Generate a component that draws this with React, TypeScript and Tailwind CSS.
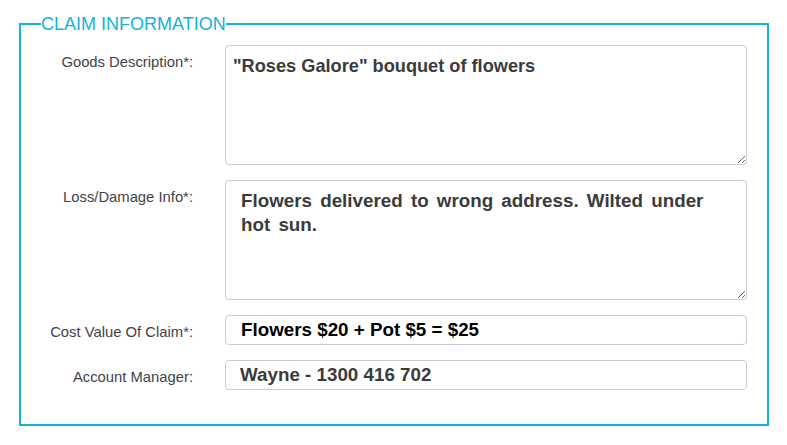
import React from "react";

const labelCls =
  "text-right pt-[7px] leading-[20px] text-[14.8px] text-[#3f424a]";

export default function App() {
  return (
    <div
      className="w-[787px] h-[445px] bg-white overflow-hidden"
      style={{ fontFamily: '"Liberation Sans", Arial, sans-serif' }}
    >
      <fieldset className="ml-[19px] mt-[14px] w-[750px] h-[412px] border-2 border-[#12b3da] m-0 p-0">
        <legend className="ml-[20px] p-0 text-[18px] leading-[20px] text-[#12b3da]">
          CLAIM INFORMATION
        </legend>
        <div className="grid grid-cols-[172px_522px] gap-x-[32px] gap-y-[15px] mt-[11px]">
          <div className={labelCls}>Goods Description*:</div>
          <textarea
            readOnly
            defaultValue={'"Roses Galore" bouquet of flowers'}
            className="h-[120px] w-[522px] border border-[#ccc] rounded-[4px] pl-[7px] pr-[12px] pt-[9px] text-[18.2px] leading-[23px] font-bold text-[#3b3b3b] outline-none resize-y"
          />
          <div className={labelCls}>Loss/Damage Info*:</div>
          <textarea
            readOnly
            defaultValue={"Flowers delivered to wrong address. Wilted under hot sun."}
            className="h-[120px] w-[522px] border border-[#ccc] rounded-[4px] pl-[15px] pr-[30px] pt-[8px] text-[18.8px] leading-[24px] font-bold text-[#3b3b3b] outline-none resize-y [word-spacing:3px]"
          />
          <div className={labelCls}>Cost Value Of Claim*:</div>
          <input
            readOnly
            value="Flowers $20 + Pot $5 = $25"
            className="h-[30px] w-[522px] border border-[#ccc] rounded-[4px] pl-[15px] text-[18.8px] font-bold text-black outline-none"
          />
          <div className={labelCls}>Account Manager:</div>
          <input
            readOnly
            value="Wayne - 1300 416 702"
            className="h-[30px] w-[522px] border border-[#ccc] rounded-[4px] pl-[14px] text-[18.8px] font-bold text-[#3b3b3b] outline-none"
          />
        </div>
      </fieldset>
    </div>
  );
}
